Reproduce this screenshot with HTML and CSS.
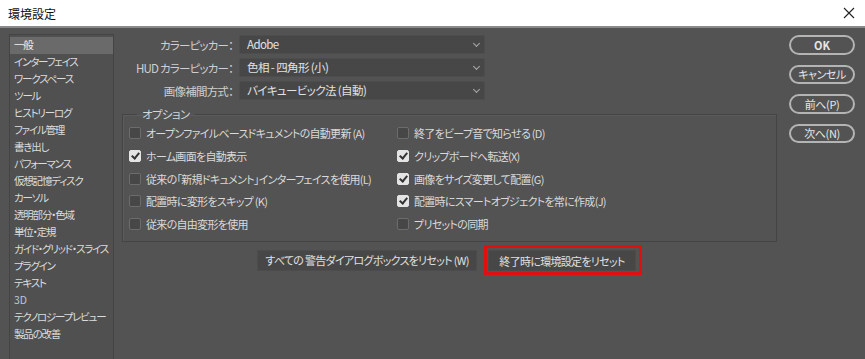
FILE: index.html
```html
<!DOCTYPE html>
<html lang="ja">
<head>
    <meta charset="UTF-8">
    <title>環境設定</title>
    <link rel="stylesheet" href="styles.css">
</head>
<body>

<div class="window">
    <div class="titlebar">
        <span class="titlebar-text">環境設定</span>
        <svg class="titlebar-close" width="12" height="12" viewBox="0 0 12 12">
            <path d="M1 1 L11 11 M11 1 L1 11" stroke="#222" stroke-width="1.1" fill="none"/>
        </svg>
    </div>

    <div class="window-body">
        <ul class="sidebar">
            <li class="sidebar-item active">一般</li>
            <li class="sidebar-item">インターフェイス</li>
            <li class="sidebar-item">ワークスペース</li>
            <li class="sidebar-item">ツール</li>
            <li class="sidebar-item">ヒストリーログ</li>
            <li class="sidebar-item">ファイル管理</li>
            <li class="sidebar-item">書き出し</li>
            <li class="sidebar-item">パフォーマンス</li>
            <li class="sidebar-item">仮想記憶ディスク</li>
            <li class="sidebar-item">カーソル</li>
            <li class="sidebar-item">透明部分・色域</li>
            <li class="sidebar-item">単位・定規</li>
            <li class="sidebar-item">ガイド・グリッド・スライス</li>
            <li class="sidebar-item">プラグイン</li>
            <li class="sidebar-item">テキスト</li>
            <li class="sidebar-item blue">3D</li>
            <li class="sidebar-item">テクノロジープレビュー</li>
            <li class="sidebar-item">製品の改善</li>
        </ul>

        <div class="main">
            <div class="form-grid">
                <label class="form-label">カラーピッカー：</label>
                <div class="select">Adobe<span class="chevron"></span></div>

                <label class="form-label">HUD カラーピッカー：</label>
                <div class="select">色相 - 四角形 (小)<span class="chevron"></span></div>

                <label class="form-label">画像補間方式：</label>
                <div class="select">バイキュービック法 (自動)<span class="chevron"></span></div>
            </div>

            <fieldset class="options">
                <legend class="options-legend">オプション</legend>
                <div class="options-grid">
                    <div class="check"><span class="box"></span>オープンファイルベースドキュメントの自動更新 (A)</div>
                    <div class="check"><span class="box"></span>終了をビープ音で知らせる (D)</div>

                    <div class="check"><span class="box checked"></span>ホーム画面を自動表示</div>
                    <div class="check"><span class="box checked"></span>クリップボードへ転送(X)</div>

                    <div class="check"><span class="box"></span>従来の「新規ドキュメント」インターフェイスを使用(L)</div>
                    <div class="check"><span class="box checked"></span>画像をサイズ変更して配置(G)</div>

                    <div class="check"><span class="box"></span>配置時に変形をスキップ (K)</div>
                    <div class="check"><span class="box checked"></span>配置時にスマートオブジェクトを常に作成(J)</div>

                    <div class="check"><span class="box"></span>従来の自由変形を使用</div>
                    <div class="check"><span class="box"></span>プリセットの同期</div>
                </div>
            </fieldset>

            <div class="reset-row">
                <button class="reset-btn wide">すべての 警告ダイアログボックスをリセット (W)</button>
                <div class="highlight">
                    <button class="reset-btn">終了時に環境設定をリセット</button>
                </div>
            </div>
        </div>

        <div class="actions">
            <button class="pill bold">OK</button>
            <button class="pill">キャンセル</button>
            <button class="pill">前へ(P)</button>
            <button class="pill">次へ(N)</button>
        </div>
    </div>
</div>

</body>
</html>
```

FILE: styles.css
```css
body {
    margin: 0;
    background: #535353;
    font-family: 'Noto Sans CJK JP', 'Noto Sans', sans-serif;
    font-feature-settings: "palt" 1;
    font-size: 11px;
    color: #d6d6d6;
}
button {
    font-feature-settings: "palt" 1;
}
.window {
    width: 865px;
    height: 359px;
    overflow: hidden;
    display: flex;
    flex-direction: column;
}
.titlebar {
    height: 26px;
    background: #fff;
    border-bottom: 2px solid #8a8a8a;
    display: flex;
    align-items: center;
    justify-content: space-between;
    padding: 0 8px 0 8px;
    color: #111;
    font-size: 12px;
    font-feature-settings: normal;
}
.titlebar-close {
    margin-right: 2px;
}
.window-body {
    flex: 1;
    display: flex;
    background: #535353;
}
.sidebar {
    list-style: none;
    margin: 6px 0 0 9px;
    padding: 2px 0 0 0;
    width: 103px;
    background: #505050;
    border: 1px solid #444;
    border-bottom: none;
    overflow: hidden;
}
.sidebar-item {
    height: 17px;
    line-height: 15px;
    padding-left: 4px;
    white-space: nowrap;
    color: #dcdcdc;
    font-size: 10.5px;
    letter-spacing: -1.2px;
}
.sidebar-item.active {
    background: #6a6a6a;
    color: #f0f0f0;
}
.sidebar-item.blue {
    color: #b9c6dc;
    letter-spacing: 0;
}
.main {
    width: 656px;
    padding: 7px 0 0 8px;
}
.form-grid {
    display: grid;
    grid-template-columns: 117px 246px;
    row-gap: 4px;
    align-items: center;
}
.form-label {
    text-align: right;
    padding-right: 6px;
    color: #cfcfcf;
    white-space: nowrap;
    font-size: 11.5px;
    letter-spacing: -0.8px;
}
.select {
    position: relative;
    box-sizing: border-box;
    height: 19px;
    line-height: 17px;
    background: #474747;
    border: 1px solid #4d4d4d;
    border-radius: 2px;
    padding-left: 7px;
    color: #e2e2e2;
    font-size: 11.5px;
    letter-spacing: -0.6px;
}
.chevron {
    position: absolute;
    right: 5px;
    top: 5px;
    width: 4px;
    height: 4px;
    border-right: 1px solid #aaa;
    border-bottom: 1px solid #aaa;
    transform: rotate(45deg);
}
.options {
    margin: 6px 0 0 0;
    padding: 0 0 6px 6px;
    width: 647px;
    border: 1px solid #444;
    box-shadow: inset 1px 1px 0 #5c5c5c;
}
.options-legend {
    margin-left: 8px;
    padding: 0 5px;
    color: #d6d6d6;
    font-size: 11.5px;
    letter-spacing: -0.6px;
}
.options-grid {
    display: grid;
    grid-template-columns: 268px 1fr;
}
.check {
    display: flex;
    align-items: center;
    height: 22.7px;
    white-space: nowrap;
    font-size: 11px;
    letter-spacing: -0.7px;
    color: #dadada;
}
.box {
    width: 10px;
    height: 10px;
    border: 1px solid #6c6c6c;
    border-radius: 2px;
    background: #474747;
    margin-right: 5px;
    position: relative;
    flex: none;
}
.box.checked {
    background: #e4e4e4;
    border-color: #e4e4e4;
}
.box.checked::after {
    content: '';
    position: absolute;
    left: 3px;
    top: 0px;
    width: 3px;
    height: 6px;
    border-right: 2px solid #333;
    border-bottom: 2px solid #333;
    transform: rotate(40deg);
}
.reset-row {
    display: flex;
    justify-content: center;
    align-items: center;
    gap: 7px;
    width: 655px;
    margin-top: 3px;
}
.reset-btn {
    font-family: inherit;
    font-size: 11px;
    letter-spacing: -0.7px;
    color: #e0e0e0;
    background: #474747;
    border: 1px solid #4c4c4c;
    height: 21px;
    padding: 0 4px;
    white-space: nowrap;
}
.reset-btn.wide {
    width: 220px;
}
.highlight {
    border: 3px solid #e01010;
    padding: 2px 3px 1px 1px;
}
.highlight .reset-btn {
    width: 148px;
}
.actions {
    display: flex;
    flex-direction: column;
    gap: 10px;
    margin: 7px 0 0 11px;
}
.pill {
    width: 66px;
    height: 19.5px;
    border: 2px solid #b4b4b4;
    border-radius: 10px;
    background: #535353;
    color: #e6e6e6;
    font-family: inherit;
    font-size: 11px;
    letter-spacing: -0.4px;
    padding: 0;
    line-height: 14px;
}
.pill.bold {
    font-weight: bold;
    letter-spacing: 0;
}
```
